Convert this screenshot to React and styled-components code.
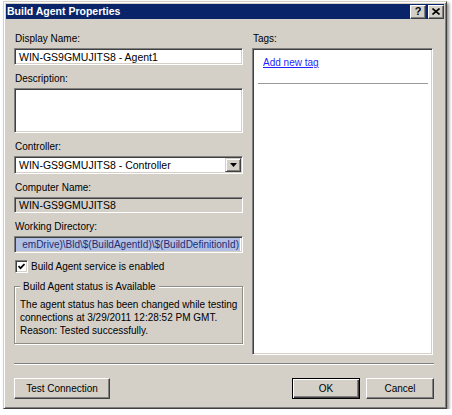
import React from "react";
import styled, { createGlobalStyle } from "styled-components";

const GlobalStyle = createGlobalStyle`
  html, body {
    margin: 0;
    padding: 0;
    background: #ffffff;
  }
  body {
    font-family: "Liberation Sans", Arial, sans-serif;
    font-size: 10px;
    color: #000;
  }
  * { box-sizing: border-box; }
`;

const Window = styled.div`
  margin: 1px 0 0 3px;
  width: 444px;
  height: 408px;
  background: #d4d0c8;
  border: 1px solid;
  border-color: #d4d0c8 #404040 #404040 #d4d0c8;
  box-shadow: inset 1px 1px 0 #fff, inset -1px -1px 0 #808080,
    2px 2px 3px rgba(0, 0, 0, 0.45);
  padding: 2px;
  display: flex;
  flex-direction: column;
`;

const TitleBar = styled.div`
  height: 15px;
  background: #0a246a;
  display: flex;
  align-items: center;
  justify-content: space-between;
  padding: 0 0 0 1px;
`;

const Title = styled.div`
  color: #fff;
  font-weight: bold;
  font-size: 10.5px;
  line-height: 15px;
`;

const CaptionButtons = styled.div`
  display: flex;
  gap: 2px;
`;

const CaptionButton = styled.div`
  width: 16px;
  height: 14px;
  background: #d4d0c8;
  border: 1px solid;
  border-color: #fff #404040 #404040 #fff;
  box-shadow: inset -1px -1px 0 #808080;
  display: flex;
  align-items: center;
  justify-content: center;
  font-weight: bold;
  font-size: 11px;
  line-height: 1;
`;

const Content = styled.div`
  flex: 1;
  display: flex;
  flex-direction: column;
  padding: 13px 10px 0 8px;
`;

const Main = styled.div`
  display: flex;
  gap: 9px;
`;

const Column = styled.div`
  width: ${(p) => p.$width}px;
  display: flex;
  flex-direction: column;
  gap: ${(p) => p.$gap || 0}px;
`;

const Field = styled.div`
  display: flex;
  flex-direction: column;
  gap: 3px;
`;

const Label = styled.div`
  line-height: 13px;
  height: 13px;
  color: #000;
  padding-left: 1px;
`;

const Sunken = styled.div`
  position: relative;
  height: ${(p) => p.$h}px;
  background: ${(p) => p.$bg || "#fff"};
  border: 1px solid;
  border-color: #808080 #fff #fff #808080;
  box-shadow: inset 1px 1px 0 #404040, inset -1px -1px 0 #d4d0c8;
  padding: 1px 2px 1px 4px;
  display: flex;
  align-items: ${(p) => (p.$top ? "flex-start" : "center")};
  white-space: nowrap;
  overflow: hidden;
  font-size: 10.5px;
`;

const Selection = styled.span`
  flex: 1;
  margin-left: -3px;
  text-align: right;
  background: #b1bfe2;
  color: #1e2c73;
  font-size: 10px;
  line-height: 13px;
  padding: 0 1px;
`;

const DropButton = styled.div`
  position: absolute;
  right: 1px;
  top: 1px;
  bottom: 1px;
  width: 16px;
  background: #d4d0c8;
  border: 1px solid;
  border-color: #d4d0c8 #404040 #404040 #d4d0c8;
  box-shadow: inset 1px 1px 0 #fff, inset -1px -1px 0 #808080;
  display: flex;
  align-items: center;
  justify-content: center;
`;

const CheckRow = styled.label`
  display: flex;
  align-items: center;
  gap: 3px;
  height: 13px;
  padding-left: 1px;
`;

const CheckBox = styled.span`
  width: 13px;
  height: 13px;
  background: #fff;
  border: 1px solid;
  border-color: #808080 #fff #fff #808080;
  box-shadow: inset 1px 1px 0 #404040, inset -1px -1px 0 #d4d0c8;
  display: flex;
  align-items: center;
  justify-content: center;
`;

const Group = styled.fieldset`
  margin: 0;
  padding: 5px 4px 6px 5px;
  border: 1px solid #8e8c86;
  box-shadow: 1px 1px 0 #fff, inset 1px 1px 0 #fff;
  line-height: 13px;
  white-space: nowrap;
  legend {
    padding: 0 3px;
    background: #d4d0c8;
    line-height: 13px;
  }
`;

const TagsBox = styled(Sunken)`
  flex-direction: column;
  align-items: stretch;
  padding: 7px 4px 0 9px;
  font-size: 10px;
`;

const Link = styled.a`
  color: #1f1fff;
  text-decoration: underline;
  line-height: 13px;
  align-self: flex-start;
  padding-left: 1px;
`;

const Rule = styled.div`
  margin: 14px 0 0 -4px;
  height: 1px;
  background: #9a9a9a;
`;

const Separator = styled.div`
  margin-top: 8px;
  height: 2px;
  border-top: 1px solid #808080;
  border-bottom: 1px solid #fff;
`;

const ButtonRow = styled.div`
  margin-top: 13px;
  display: flex;
  justify-content: space-between;
`;

const ButtonGroup = styled.div`
  display: flex;
  gap: 6px;
`;

const Button = styled.button`
  width: ${(p) => p.$w}px;
  height: 21px;
  padding: 0;
  font-family: inherit;
  font-size: 10px;
  color: #000;
  background: #d4d0c8;
  border: 1px solid;
  border-color: ${(p) =>
    p.$default ? "#000" : "#fff #404040 #404040 #fff"};
  box-shadow: ${(p) =>
    p.$default
      ? "inset 1px 1px 0 #fff, inset -1px -1px 0 #404040, inset -2px -2px 0 #808080"
      : "inset -1px -1px 0 #808080"};
`;

export default function App() {
  return (
    <>
      <GlobalStyle />
      <Window>
        <TitleBar>
          <Title>Build Agent Properties</Title>
          <CaptionButtons>
            <CaptionButton>?</CaptionButton>
            <CaptionButton>
              <svg width="8" height="7" viewBox="0 0 8 7">
                <path d="M0.5 0.5 L7.5 6.5 M7.5 0.5 L0.5 6.5" stroke="#000" strokeWidth="1.6" />
              </svg>
            </CaptionButton>
          </CaptionButtons>
        </TitleBar>
        <Content>
          <Main>
            <Column $width={229} $gap={7}>
              <Field>
                <Label>Display Name:</Label>
                <Sunken $h={17}>WIN-GS9GMUJITS8 - Agent1</Sunken>
              </Field>
              <Field>
                <Label>Description:</Label>
                <Sunken $h={45} $top />
              </Field>
              <Field>
                <Label>Controller:</Label>
                <Sunken $h={18}>
                  WIN-GS9GMUJITS8 - Controller
                  <DropButton>
                    <svg width="7" height="4" viewBox="0 0 7 4">
                      <path d="M0 0 H7 L3.5 4 Z" fill="#000" />
                    </svg>
                  </DropButton>
                </Sunken>
              </Field>
              <Field>
                <Label>Computer Name:</Label>
                <Sunken $h={16} $bg="#d4d0c8">WIN-GS9GMUJITS8</Sunken>
              </Field>
              <Field>
                <Label>Working Directory:</Label>
                <Sunken $h={17}>
                  <Selection>emDrive)\Bld\$(BuildAgentId)\$(BuildDefinitionId)</Selection>
                </Sunken>
              </Field>
              <CheckRow>
                <CheckBox>
                  <svg width="7" height="7" viewBox="0 0 7 7">
                    <path d="M0.5 3 L2.5 5.2 L6.5 1" stroke="#000" strokeWidth="1.7" fill="none" />
                  </svg>
                </CheckBox>
                Build Agent service is enabled
              </CheckRow>
              <Group>
                <legend>Build Agent status is Available</legend>
                The agent status has been changed while testing
                <br />
                connections at 3/29/2011 12:28:52 PM GMT.
                <br />
                Reason: Tested successfully.
              </Group>
            </Column>
            <Column $width={181} $gap={3}>
              <Label>Tags:</Label>
              <TagsBox $h={307}>
                <Link>Add new tag</Link>
                <Rule />
              </TagsBox>
            </Column>
          </Main>
          <Separator />
          <ButtonRow>
            <Button $w={96}>Test Connection</Button>
            <ButtonGroup>
              <Button $w={68} $default>OK</Button>
              <Button $w={68}>Cancel</Button>
            </ButtonGroup>
          </ButtonRow>
        </Content>
      </Window>
    </>
  );
}
